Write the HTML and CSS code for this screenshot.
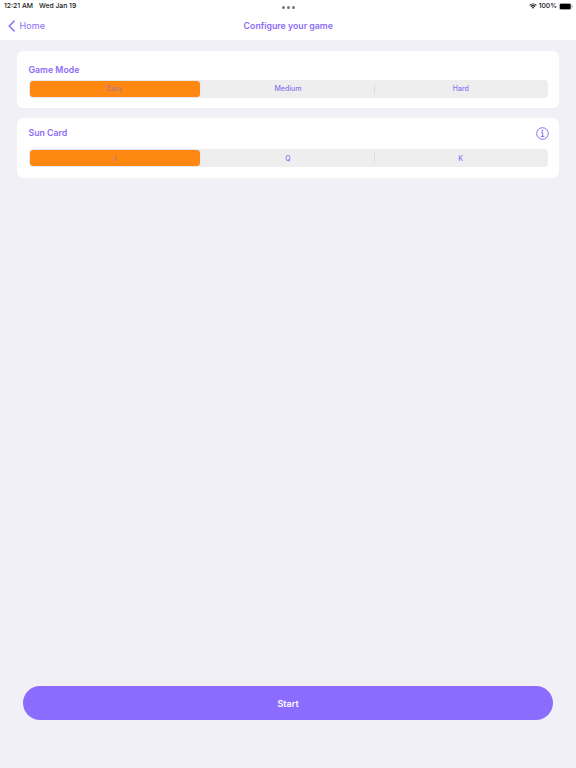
FILE: index.html
```html
<!DOCTYPE html>
<html lang="en">
<head>
    <meta charset="UTF-8">
    <meta name="viewport" content="width=device-width, initial-scale=1.0">
    <title>Configure your game</title>
    <link rel="stylesheet" href="styles.css">
</head>
<body>
    <header class="header">
        <div class="status-bar">
            <div class="status-left">
                <span class="time">12:21 AM</span>
                <span class="date">Wed Jan 19</span>
            </div>
            <div class="dots"><i></i><i></i><i></i></div>
            <div class="status-right">
                <svg class="wifi" viewBox="0 0 16 12">
                    <path d="M1.2 4.6a9.8 9.8 0 0 1 13.6 0M3.8 7.2a6.2 6.2 0 0 1 8.4 0" fill="none" stroke="#111" stroke-width="2.2"/>
                    <path d="M8 11.6L5.6 9.2a3.5 3.5 0 0 1 4.8 0z" fill="#111"/>
                </svg>
                <span class="percent">100%</span>
                <svg class="battery" viewBox="0 0 14 7">
                    <rect x="0.25" y="0.25" width="12" height="6.5" rx="1.8" fill="none" stroke="#999" stroke-width="0.5"/>
                    <rect x="0.8" y="0.8" width="10.9" height="5.4" rx="1.3" fill="#000"/>
                    <path d="M13 2.4v2.2a1.2 1.2 0 0 0 0-2.2z" fill="#999"/>
                </svg>
            </div>
        </div>
        <nav class="nav">
            <a class="back" href="#">
                <svg class="chevron" viewBox="0 0 7 12">
                    <path d="M6.2 1L1.2 6l5 5" fill="none" stroke="currentColor" stroke-width="1.5" stroke-linecap="round" stroke-linejoin="round"/>
                </svg>
                <span>Home</span>
            </a>
            <h1 class="title">Configure your game</h1>
        </nav>
    </header>

    <main class="content">
        <section class="card">
            <div class="card-head">
                <h2>Game Mode</h2>
            </div>
            <div class="segmented">
                <button class="segment selected" type="button">Easy</button>
                <button class="segment" type="button">Medium</button>
                <button class="segment divided" type="button">Hard</button>
            </div>
        </section>

        <section class="card card-sun">
            <div class="card-head">
                <h2>Sun Card</h2>
                <svg class="info" viewBox="0 0 13 13">
                    <circle cx="6.5" cy="6.5" r="5.8" fill="none" stroke="currentColor" stroke-width="1"/>
                    <circle cx="6.4" cy="3.7" r="0.9" fill="currentColor"/>
                    <path d="M5.2 5.6h1.5v3.7M4.8 9.4h3.6" fill="none" stroke="currentColor" stroke-width="1"/>
                </svg>
            </div>
            <div class="segmented">
                <button class="segment selected" type="button">J</button>
                <button class="segment" type="button">Q</button>
                <button class="segment divided" type="button">K</button>
            </div>
        </section>
    </main>

    <button class="start" type="button">Start</button>
</body>
</html>
```
FILE: styles.css
```css
* {
    margin: 0;
    padding: 0;
    box-sizing: border-box;
    font-family: Inter, sans-serif;
}

body {
    background-color: #f1f0f6;
    color: #8b6cf6;
    display: flex;
    flex-direction: column;
    height: 100vh;
    overflow: hidden;
}

.header {
    background-color: #fff;
    height: 40px;
}

.status-bar {
    display: grid;
    grid-template-columns: 1fr auto 1fr;
    align-items: center;
    height: 12px;
    padding: 0 3px 0 4px;
    color: #111;
    font-size: 6.8px;
    font-weight: 500;
    line-height: 12px;
    white-space: nowrap;
}

.status-left {
    display: flex;
    gap: 6px;
}

.dots {
    display: flex;
    gap: 2px;
    padding-top: 3px;
}

.dots i {
    width: 3px;
    height: 3px;
    border-radius: 50%;
    background-color: #777;
}

.status-right {
    display: flex;
    align-items: center;
    justify-content: flex-end;
    gap: 2px;
}

.wifi {
    width: 8px;
    height: 6px;
}

.battery {
    width: 14px;
    height: 7px;
}

.nav {
    display: grid;
    grid-template-columns: 1fr auto 1fr;
    align-items: center;
    height: 27px;
    padding: 0 7px 0 7.5px;
}

.back {
    display: flex;
    align-items: center;
    gap: 5px;
    color: inherit;
    font-size: 9.1px;
    text-decoration: none;
}

.chevron {
    width: 7px;
    height: 12px;
}

.title {
    font-size: 8.75px;
    font-weight: 600;
}

.content {
    flex: 1;
    padding: 11px 17px 0;
}

.card {
    background-color: #fff;
    border-radius: 6px;
    height: 57px;
    padding: 11px 11px 0 11.5px;
    margin-bottom: 10px;
}

.card-head {
    display: flex;
    justify-content: space-between;
    height: 18px;
    line-height: 17px;
}

.card h2 {
    font-size: 8.75px;
    font-weight: 600;
}

.segmented {
    display: grid;
    grid-template-columns: 172px 173px 1fr;
    height: 18px;
    padding: 1px;
    border-radius: 4px;
    background-color: #eee;
}

.segment {
    position: relative;
    padding-bottom: 1px;
    border: none;
    background: none;
    color: #8b75f0;
    font-size: 7px;
    font-weight: 500;
    cursor: pointer;
}

.selected {
    border-radius: 3.5px;
    margin-right: 2px;
    background-color: #ff8812;
    color: #b8788a;
    box-shadow: 0 0 1px rgba(0, 0, 0, 0.2);
}

.divided::before {
    content: "";
    position: absolute;
    left: -1px;
    top: 3px;
    bottom: 3px;
    width: 1px;
    background-color: #dcdce0;
}

.card-sun {
    height: 60px;
    padding-top: 7px;
}

.card-sun .card-head {
    height: 24px;
}

.card-sun .segment {
    padding-bottom: 0;
}

.info {
    width: 13px;
    height: 13px;
    margin-top: 1.5px;
    margin-right: -1px;
}

.start {
    height: 34px;
    margin: 0 23px 48px;
    border: none;
    border-radius: 17px;
    background-color: #8b6cff;
    color: #fff;
    font-size: 9px;
    font-weight: 600;
    cursor: pointer;
}
```
